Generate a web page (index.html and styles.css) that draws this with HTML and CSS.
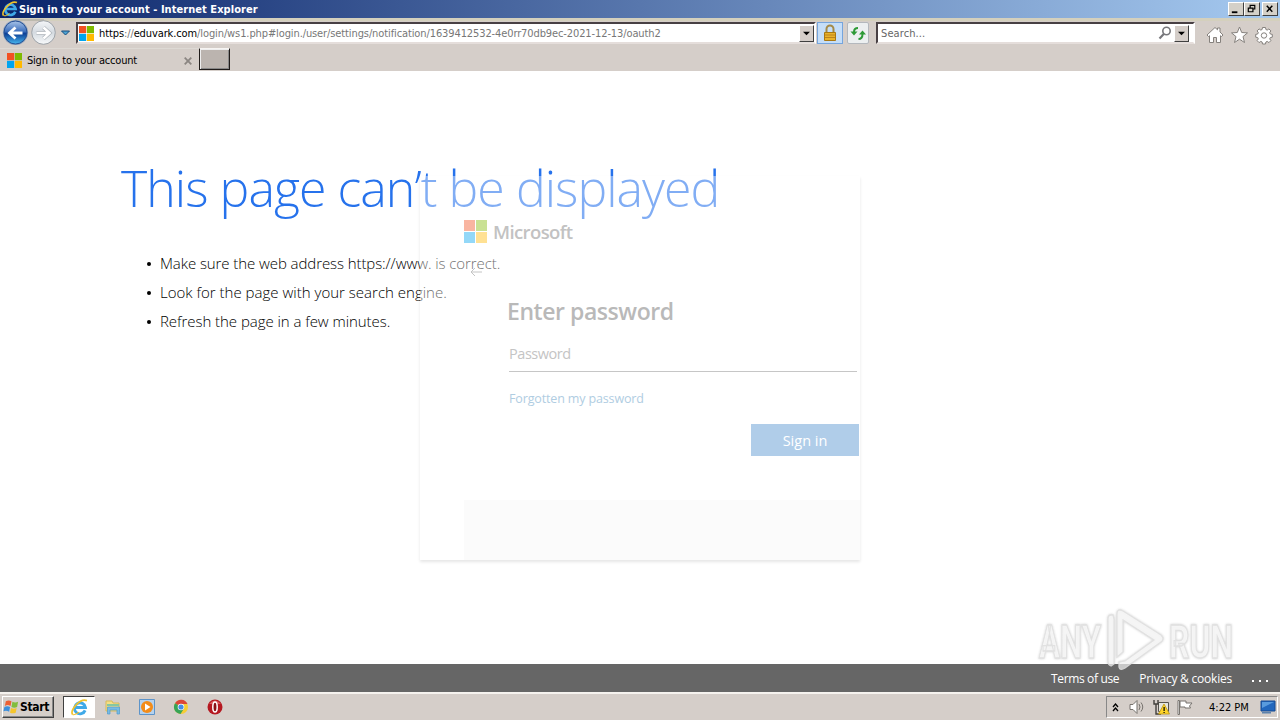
FILE: index.html
```html
<!DOCTYPE html>
<html lang="en">
<head>
<meta charset="utf-8">
<title>Sign in to your account</title>
<link rel="stylesheet" href="styles.css">
</head>
<body>
<svg class="defs" aria-hidden="true">
  <symbol id="ie" viewBox="0 0 16 16"><path d="M13.3 10.7A5.2 5.2 0 1 1 13.6 8H4" fill="none" stroke="#3fa9e8" stroke-width="2.7"/><path d="M1.5 14.5C-1 11 8-1 15 1.500" fill="none" stroke="#f0c22c" stroke-width="1.600"/><path d="M1.500 14.500c2 1 4-.5 6-2" fill="none" stroke="#f0c22c"/></symbol>
  <symbol id="ms" viewBox="0 0 23 23"><path fill="#f25022" d="M0 0h11v11H0z"/><path fill="#7fba00" d="M12 0h11v11H12z"/><path fill="#00a4ef" d="M0 12h11v11H0z"/><path fill="#ffb900" d="M12 12h11v11H12z"/></symbol>
</svg>

<header class="titlebar">
  <svg class="ie-small"><use href="#ie"/></svg>
  <span class="title-text">Sign in to your account - Internet Explorer</span>
  <div class="window-buttons">
    <svg class="wbtn" viewBox="0 0 15 13"><path d="M3 9h6v2H3z"/></svg>
    <svg class="wbtn" viewBox="0 0 15 13"><path d="M5.500 5V2.500h5v4H9M5 2.500h6M3.500 5.500h5v4h-5zM3 5.500h6" fill="none" stroke="#000" stroke-width="1.300"/></svg>
    <svg class="wbtn last" viewBox="0 0 15 13"><path d="M4 3l6 6.500M10 3L4 9.500" fill="none" stroke="#000" stroke-width="1.600"/></svg>
  </div>
</header>

<nav class="navbar">
  <svg class="history" viewBox="0 0 74 28">
    <defs>
      <linearGradient id="blue" x1="0" y1="0" x2="0" y2="1"><stop offset="0" stop-color="#a9c4e8"/><stop offset=".45" stop-color="#3e70bd"/><stop offset=".55" stop-color="#0c3f96"/><stop offset="1" stop-color="#48b8f0"/></linearGradient>
      <linearGradient id="grey" x1="0" y1="0" x2="0" y2="1"><stop offset="0" stop-color="#f4f6f8"/><stop offset=".5" stop-color="#d4dae0"/><stop offset="1" stop-color="#f8fafb"/></linearGradient>
    </defs>
    <path d="M15 2h29" stroke="#a6a3a0"/>
    <circle cx="15.500" cy="14.500" r="12.600" fill="#94a5bd"/><circle cx="15.500" cy="14.500" r="11.500" fill="url(#blue)" stroke="#254f93"/>
    <circle cx="43.500" cy="14.500" r="11.800" fill="url(#grey)" stroke="#9da3a9"/>
    <path d="M22.500 15H10M15.500 9.500L9.500 15l6 5.500" fill="none" stroke="#fff" stroke-width="2.800"/>
    <path d="M36.500 15H49M43.500 9.500l6 5.500-6 5.500" fill="none" stroke="#aab0b7" stroke-width="3.800"/><path d="M36.500 15H49M43.500 9.500l6 5.500-6 5.500" fill="none" stroke="#fff" stroke-width="2.600"/>
    <path d="M61.500 13h8l-4 4z" fill="#4ca3d4" stroke="#174d7c"/>
  </svg>
  <div class="address">
    <svg class="favicon"><use href="#ms"/></svg>
    <span class="url"><b>https</b>://<b>eduvark.com</b>/login/ws1.php#login./user/settings/notification/1639412532-4e0rr70db9ec-2021-12-13/oauth2</span>
    <svg class="drop" viewBox="0 0 15 17"><path d="M3.500 6.500h8l-4 4z"/></svg>
  </div>
  <div class="lock"><svg viewBox="0 0 16 18"><path d="M4.500 9V5a3.500 3.500 0 0 1 7 0v4" fill="none" stroke="#a48a48" stroke-width="2"/><path d="M2.500 8.500h11v8h-11z" fill="#e9b32b" stroke="#a97812"/><path d="M3 11h10M3 13.500h10" stroke="#bd831c"/></svg></div>
  <div class="refresh"><svg viewBox="0 0 18 18"><path d="M9 4Q5 4 5 8M9.500 15q4 0 4-5" fill="none" stroke="#2d9a36" stroke-width="2"/><path d="M1.500 7.500h7L5 11.500zM10 10.500h7l-3.500-4z" fill="#2d9a36"/></svg></div>
  <div class="search">
    <span class="search-text">Search...</span>
    <svg class="magnifier" viewBox="0 0 14 14"><circle cx="8.500" cy="5" r="3.700" fill="none" stroke="#77777b" stroke-width="1.600"/><path d="M6 7.800L1.500 12.500" stroke="#77777b" stroke-width="2.200"/></svg>
    <svg class="drop" viewBox="0 0 15 17"><path d="M3.500 6.500h8l-4 4z"/></svg>
  </div>
  <svg class="tools" viewBox="0 0 70 20" fill="#fff" stroke="#85817d">
    <path d="M1 10L9 2.500l2.500 2.300V3h2.500v4l3 3-1.500 1.500-1-.8v6.800h-4v-5H7.500v5h-4v-6.800l-1 .8z"/>
    <path d="M33.500 2l2.200 5.500 5.800.4-4.500 3.700 1.500 5.900-5-3.300-5 3.300 1.500-5.900-4.500-3.700 5.800-.4z"/>
    <path d="M56.500 2.500h3l.4 2 1.300.6 1.700-1.200 2 2-1.200 1.700.6 1.400 2 .4v2.800l-2 .4-.6 1.300 1.200 1.700-2 2-1.700-1.200-1.300.6-.4 2h-3l-.4-2-1.300-.6-1.700 1.200-2-2 1.200-1.700-.6-1.300-2-.4V9.400l2-.4.6-1.400-1.200-1.700 2-2 1.700 1.200 1.300-.6z"/><circle cx="58" cy="10.500" r="2.700"/>
  </svg>
</nav>

<div class="tabs">
  <div class="tab"><svg class="favicon"><use href="#ms"/></svg><span class="tab-text">Sign in to your account</span><svg class="close" viewBox="0 0 8 8"><path d="M.7.7l6.600 6.600M7.300.7L.7 7.300" stroke="#8b8682" stroke-width="1.800"/></svg></div>
  <div class="new-tab"></div>
</div>

<main class="page">
  <h1>This page can’t be displayed</h1>
  <ul>
    <li><span class="l1">Make sure the web address https://www. is correct.</span></li>
    <li><span class="l2">Look for the page with your search engine.</span></li>
    <li><span class="l3">Refresh the page in a few minutes.</span></li>
  </ul>
  <section class="card">
    <div class="brand"><svg class="brand-mark"><use href="#ms"/></svg><span class="brand-name">Microsoft</span></div>
    <svg class="back" viewBox="0 0 12 10"><path d="M12 5H1M5 1L1 5l4 4" fill="none" stroke="#c4c4c4"/></svg>
    <div class="form">
      <h2><span>Enter password</span></h2>
      <div class="field"><span>Password</span></div>
      <div class="forgot"><span>Forgotten my password</span></div>
      <div class="submit"><span>Sign in</span></div>
    </div>
    <div class="card-foot"></div>
  </section>
</main>

<footer class="links"><span class="terms">Terms of use</span><span class="privacy">Privacy &amp; cookies</span><svg class="dots" viewBox="0 0 18 4" fill="#fff"><path d="M1 1h2v2H1zM8 1h2v2H8zM15 1h2v2h-2z"/></svg></footer>

<svg class="watermark" viewBox="0 0 230 70">
  <g fill="#fff" fill-opacity=".7" stroke="#dedede" stroke-width="1.300">
    <text x="9" y="50" textLength="62" lengthAdjust="spacingAndGlyphs">ANY</text>
    <text x="139" y="50" textLength="64" lengthAdjust="spacingAndGlyphs">RUN</text>
    <path fill-rule="evenodd" d="M81 7q-3 0-3 4v42q0 4 3 5l3-2V11l-1-4zM87 6q0-6 6-3l38 24q4 4 0 7L95 60q-5 3-6-1v-5l6-1 29-21L93 12v32l-6 5z"/>
  </g>
</svg>

<div class="taskbar">
  <div class="start"><svg viewBox="0 0 17 16"><path d="M3 2q3-2 6 0L8 7Q5 5 2 7z" fill="#ed6034"/><path d="M10 2.500q3 1.500 6 0L15 8q-3 1.500-6 0z" fill="#82bd3c"/><path d="M1.500 8q3-1.500 6 0l-1 5q-3-2-6-.5z" fill="#3d8fdc"/><path d="M8.500 9q3 1.500 6 0l-1 5q-3 1.500-6 0z" fill="#f5c52c"/></svg><span>Start</span></div>
  <div class="task active"><svg viewBox="0 0 16 16"><use href="#ie"/></svg></div>
  <svg class="app" viewBox="0 0 16 16"><path d="M1 2h6l1 2h6v8H1z" fill="#f4df85" stroke="#d5b95c"/><path d="M2 5h12v2H2z" fill="#85c7a2"/><path d="M2.500 8h12v7H12v-4H5v4H2.500z" fill="#78bbe4" stroke="#4d9bcf" stroke-width=".7"/></svg>
  <svg class="app" viewBox="0 0 16 16"><path d="M.5.500h15v15H.5z" fill="#b5d2ee" stroke="#5d94c9"/><circle cx="8" cy="8" r="6" fill="#f38c19"/><path d="M6 4.500l5.500 3.500L6 11.500z" fill="#fff"/></svg>
  <svg class="app" viewBox="0 0 16 16"><circle cx="8" cy="8" r="7" fill="#f6cd35"/><path d="M8 8L2 4.300A7 7 0 0 1 14.500 5H8z" fill="#dc4639"/><path d="M8 8L2 4.300A7 7 0 0 0 7.500 15L11 9.500z" fill="#37a457"/><circle cx="8" cy="8" r="3.300" fill="#fff"/><circle cx="8" cy="8" r="2.600" fill="#458de6"/></svg>
  <svg class="app" viewBox="0 0 16 16"><circle cx="8" cy="8" r="7.500" fill="#b51820"/><path d="M2 5Q8-2 14 5z" fill="#dc595c"/><ellipse cx="8" cy="8" rx="2.200" ry="5" fill="#8b1015" stroke="#fff" stroke-width="1.500"/></svg>
  <div class="tray">
    <svg class="chev" viewBox="0 0 7 9"><path d="M1 4l2.500-3L6 4M1 8l2.500-3L6 8" fill="none" stroke="#000" stroke-width="1.300"/></svg>
    <svg class="sound" viewBox="0 0 16 16"><path d="M1 5.500h3L8 1.500v13l-4-4H1z" fill="#fff" stroke="#77736e"/><path d="M10 5q2 3 0 6M12 3.500q3.500 4.500 0 9" fill="none" stroke="#77736e"/></svg>
    <svg class="network" viewBox="0 0 17 16"><path d="M5.500 3.500h10v9h-10z" fill="#e5e5de" stroke="#55534f"/><path d="M1 1v4h4V1M3 5v10h5" fill="none" stroke="#42403d" stroke-width="1.400"/><path d="M11 5l5.500 10h-11z" fill="#ffd529" stroke="#bb9612" stroke-width=".8"/><path d="M10.500 8h1.200v4h-1.200zM10.500 13h1.200v1h-1.200z"/></svg>
    <svg class="flag" viewBox="0 0 16 16"><path d="M1 1.500h1.500v14H1zM3 2h6v2h6l-2.500 3 1 2H8V8H3z" fill="#fff" stroke="#77736e"/></svg>
    <span class="clock">4:22 PM</span>
    <svg class="desktop" viewBox="0 0 16 14"><path d="M1 1h14v10H1z" fill="#2267bd" stroke="#164b91"/><path d="M2 2h12L2 8z" fill="#599bdd"/><path d="M2 12h9v1.500H2z" fill="#5d82ac"/></svg>
  </div>
</div>
</body>
</html>
```
FILE: styles.css
```css
*{box-sizing:border-box}
body{margin:0;width:1280px;height:720px;overflow:hidden;display:flex;flex-direction:column;position:relative;background:#fff;font-family:"DejaVu Sans Condensed","DejaVu Sans",sans-serif;font-stretch:condensed;font-size:11px;color:#000}
svg{display:block;flex:none}
span{white-space:nowrap}
.defs{position:absolute;width:0;height:0}
.titlebar{height:18px;flex:none;display:flex;align-items:center;background:linear-gradient(90deg,#0a246a,#a6caf0);color:#fff;padding:0 2px}
.ie-small{width:16px;height:16px;margin-right:1px}
.title-text{font-weight:bold;line-height:16px;padding-top:1px;letter-spacing:.05px}
.window-buttons{display:flex;margin-left:auto}
.wbtn{width:16px;height:14px;background:#d4d0c8;border:1px solid;border-color:#fff #404040 #404040 #fff}
.wbtn.last{margin-left:2px}
.navbar{height:30px;flex:none;display:flex;background:#d5cec9;border-top:3px solid #d4d0bd}
.history{width:74px;height:28px;margin:-3px 2px 0 0}
.address,.search{height:22px;margin-top:1px;background:#fff;border:2px solid;border-color:#484044 #fff #e5dedb #484044;display:flex;align-items:center}
.address{width:740px}
.favicon{width:15px;height:15px}
.address .favicon{margin:0 5px 0 1px}
.url{color:#777;letter-spacing:-.108px;padding-top:1px}
.url b{font-weight:normal;color:#000}
.drop{width:15px;height:17px;background:#d5cec9;border:1px solid;border-color:#fff #404040 #404040 #fff;margin-left:auto}
.lock{width:26px;height:22px;margin:1px 4px 0 1px;background:#c5def8;border:1px solid #75a5dd;display:grid;place-items:center}
.lock svg{width:16px;height:18px}
.refresh{width:22px;height:22px;margin:1px 7px 0 0;background:#eceff0;border:1px solid #b4b8bd;display:grid;place-items:center;border-radius:2px}
.refresh svg{width:18px;height:18px}
.search{width:319px;padding-left:3px}
.search-text{color:#666;padding-top:1px;letter-spacing:.1px}
.magnifier{width:14px;height:14px;margin-left:auto}
.search .drop{margin:0 4px 0 2px}
.tools{width:70px;height:20px;margin:4px 0 0 11px}
.tabs{height:23px;flex:none;display:flex;background:#d5cec9}
.tab{width:199px;display:flex;align-items:center;padding:1px 7px 0;border-top:1px solid #ddd9d4}
.tab .favicon{margin-right:5px}
.tab-text{letter-spacing:-.21px}
.close{width:8px;height:8px;margin-left:auto}
.new-tab{width:31px;height:22px;background:#bbb4af;border:1px solid;border-color:#f7f5f3 #201c1a #201c1a #201c1a;box-shadow:inset 1px 1px #eee,inset -1px -1px #888}
.page{height:593px;flex:none;position:relative;padding:82px 0 0 121px;font-family:"Open Sans","Noto Sans",sans-serif;font-stretch:normal;background:#fff}
h1{font-weight:300;font-size:50px;line-height:70px;margin:0;color:#2672ec;white-space:nowrap;letter-spacing:-.95px}
ul{list-style:none;margin:26px 0 0;padding:0 0 0 39px;font-size:15px;font-weight:300}
li{height:29px;line-height:29px;position:relative}
li::before{content:"";position:absolute;left:-13px;top:13px;width:4px;height:4px;border-radius:50%;background:#000}
.l1{letter-spacing:-.08px}
.l2{letter-spacing:.01px}
.l3{letter-spacing:-.05px}
.card{position:absolute;left:420px;top:105px;width:440px;height:384px;background:rgba(255,255,255,.42);box-shadow:0 2px 3px rgba(0,0,0,.1);padding:44px 0 0 44px;display:flex;flex-direction:column}
.brand{display:flex;height:23px;align-items:center}
.brand-mark{width:23px;height:23px;opacity:.42}
.brand-name{font-size:18.500px;font-weight:600;color:#c2c2c2;margin-left:6px;line-height:23px;letter-spacing:-.6px}
.back{width:12px;height:10px;margin:24px 0 0 6px}
.form{margin-left:43px;height:179px;margin-top:18px;display:flex;flex-direction:column}
h2{margin:0;font-size:23px;font-weight:600;line-height:32px;color:#b9b9b9;letter-spacing:-.44px}
.field{margin:10px 3px 0 2px;height:35px;border-bottom:1px solid #c6c6c6;font-size:14.500px;line-height:34px;color:#c4c4c4;letter-spacing:-.45px}
.forgot{margin:17px 0 0 2px;line-height:20px;height:20px;font-size:12.500px;color:#b0cde2;letter-spacing:-.14px}
.submit{width:108px;height:32px;background:#b0cde9;margin:15px 1px 0 auto;text-align:center;line-height:33px;font-size:14.500px;color:#fff}
.card-foot{height:60px;margin-top:auto;background:#fbfbfb}
.links{height:28px;flex:none;background:#666;color:#fff;display:flex;align-items:center;padding-left:1051px;font:12px/28px "Open Sans","Noto Sans",sans-serif}
.links span{padding-top:1px}
.terms{letter-spacing:-.35px}
.privacy{margin-left:20px;letter-spacing:-.22px}
.dots{width:18px;height:4px;margin:5px 11px 0 auto}
.watermark{position:absolute;left:1030px;top:608px;width:230px;height:70px;opacity:.9;filter:drop-shadow(0 0 1px rgba(120,120,120,.4));font:700 46px Roboto,sans-serif}
.taskbar{height:28px;flex:none;display:flex;align-items:center;background:#d5cec9;border-top:2px solid #f5f2ee;padding:1px 2px 1px}
.start{width:52px;height:22px;display:flex;align-items:center;border:1px solid;border-color:#fff #404040 #404040 #fff;box-shadow:inset -1px -1px #888;font-weight:bold;font-size:12px;letter-spacing:-.35px}
.start svg{width:16px;height:16px;margin-right:1px}
.task{width:32px;height:22px;margin:0 10px 0 9px;background:#fff;border:1px solid;border-color:#404040 #fff #fff #404040;display:grid;place-items:center}
.task svg{width:17px;height:17px}
.app{width:16px;height:16px;margin-right:18px}
.tray{width:172px;height:22px;margin-left:auto;border:1px solid;border-color:#888 #fff #fff #888;display:flex;align-items:center}
.chev{width:7px;height:9px;margin-left:5px}
.sound{width:16px;height:16px;margin-left:10px}
.network{width:17px;height:16px;margin-left:8px}
.flag{width:16px;height:16px;margin-left:7px}
.clock{margin-left:16px}
.desktop{width:16px;height:14px;margin:0 1px 0 auto}
```
